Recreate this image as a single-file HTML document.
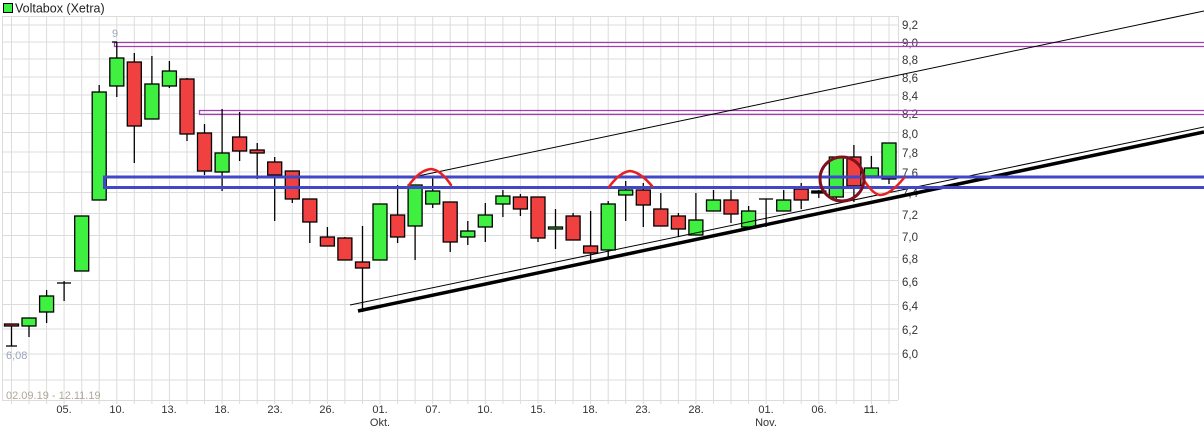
<!DOCTYPE html>
<html><head><meta charset="utf-8"><style>
html,body{margin:0;padding:0;background:#fff;}
svg{display:block;font-family:"Liberation Sans",sans-serif;}
</style></head><body>
<svg width="1204" height="435" viewBox="0 0 1204 435" xmlns="http://www.w3.org/2000/svg">
<rect width="1204" height="435" fill="#fff"/>
<!-- title -->
<rect x="3.5" y="3.5" width="9" height="9" fill="#40f040" stroke="#000" stroke-width="1"/>
<text x="15" y="12.5" font-size="12.5" fill="#222">Voltabox (Xetra)</text>
<!-- grid -->
<g stroke="#dcdcdc" stroke-width="1">
<line x1="2" y1="16.5" x2="898" y2="16.5"/>
<line x1="2" y1="400.5" x2="898" y2="400.5"/>
<line x1="2.5" y1="16" x2="2.5" y2="400"/>
<line x1="898.5" y1="16" x2="898.5" y2="400"/>
<g>
<line x1="2" x2="898" y1="25" y2="25"/><line x1="2" x2="898" y1="42" y2="42"/><line x1="2" x2="898" y1="59" y2="59"/><line x1="2" x2="898" y1="77" y2="77"/><line x1="2" x2="898" y1="95" y2="95"/><line x1="2" x2="898" y1="113.5" y2="113.5"/><line x1="2" x2="898" y1="132.5" y2="132.5"/><line x1="2" x2="898" y1="152" y2="152"/><line x1="2" x2="898" y1="172" y2="172"/><line x1="2" x2="898" y1="192.5" y2="192.5"/><line x1="2" x2="898" y1="213.5" y2="213.5"/><line x1="2" x2="898" y1="235.5" y2="235.5"/><line x1="2" x2="898" y1="257.5" y2="257.5"/><line x1="2" x2="898" y1="280.5" y2="280.5"/><line x1="2" x2="898" y1="304.5" y2="304.5"/><line x1="2" x2="898" y1="329" y2="329"/><line x1="2" x2="898" y1="354" y2="354"/><line x1="2" x2="898" y1="380" y2="380"/>
</g>
<g id="vg">
<line x1="11.5" x2="11.5" y1="16" y2="404"/><line x1="29" x2="29" y1="16" y2="404"/><line x1="46.6" x2="46.6" y1="16" y2="404"/><line x1="64.1" x2="64.1" y1="16" y2="404"/><line x1="81.7" x2="81.7" y1="16" y2="404"/><line x1="99.2" x2="99.2" y1="16" y2="404"/><line x1="116.8" x2="116.8" y1="16" y2="404"/><line x1="134.3" x2="134.3" y1="16" y2="404"/><line x1="151.9" x2="151.9" y1="16" y2="404"/><line x1="169.4" x2="169.4" y1="16" y2="404"/><line x1="187" x2="187" y1="16" y2="404"/><line x1="204.5" x2="204.5" y1="16" y2="404"/><line x1="222.1" x2="222.1" y1="16" y2="404"/><line x1="239.6" x2="239.6" y1="16" y2="404"/><line x1="257.2" x2="257.2" y1="16" y2="404"/><line x1="274.7" x2="274.7" y1="16" y2="404"/><line x1="292.3" x2="292.3" y1="16" y2="404"/><line x1="309.8" x2="309.8" y1="16" y2="404"/><line x1="327.4" x2="327.4" y1="16" y2="404"/><line x1="344.9" x2="344.9" y1="16" y2="404"/><line x1="362.5" x2="362.5" y1="16" y2="404"/><line x1="380" x2="380" y1="16" y2="404"/><line x1="397.6" x2="397.6" y1="16" y2="404"/><line x1="415.1" x2="415.1" y1="16" y2="404"/><line x1="432.7" x2="432.7" y1="16" y2="404"/><line x1="450.2" x2="450.2" y1="16" y2="404"/><line x1="467.8" x2="467.8" y1="16" y2="404"/><line x1="485.3" x2="485.3" y1="16" y2="404"/><line x1="502.9" x2="502.9" y1="16" y2="404"/><line x1="520.4" x2="520.4" y1="16" y2="404"/><line x1="538" x2="538" y1="16" y2="404"/><line x1="555.5" x2="555.5" y1="16" y2="404"/><line x1="573.1" x2="573.1" y1="16" y2="404"/><line x1="590.6" x2="590.6" y1="16" y2="404"/><line x1="608.2" x2="608.2" y1="16" y2="404"/><line x1="625.7" x2="625.7" y1="16" y2="404"/><line x1="643.3" x2="643.3" y1="16" y2="404"/><line x1="660.8" x2="660.8" y1="16" y2="404"/><line x1="678.4" x2="678.4" y1="16" y2="404"/><line x1="695.9" x2="695.9" y1="16" y2="404"/><line x1="713.5" x2="713.5" y1="16" y2="404"/><line x1="731" x2="731" y1="16" y2="404"/><line x1="748.6" x2="748.6" y1="16" y2="404"/><line x1="766.1" x2="766.1" y1="16" y2="404"/><line x1="783.7" x2="783.7" y1="16" y2="404"/><line x1="801.2" x2="801.2" y1="16" y2="404"/><line x1="818.8" x2="818.8" y1="16" y2="404"/><line x1="836.3" x2="836.3" y1="16" y2="404"/><line x1="853.9" x2="853.9" y1="16" y2="404"/><line x1="871.4" x2="871.4" y1="16" y2="404"/><line x1="889" x2="889" y1="16" y2="404"/>
</g>
</g>
<!-- right axis labels -->
<g font-size="11.5" fill="#333">
<text x="902" y="29">9,2</text><text x="902" y="47">9,0</text><text x="902" y="64">8,8</text><text x="902" y="82">8,6</text><text x="902" y="100">8,4</text><text x="902" y="118">8,2</text><text x="902" y="138">8,0</text><text x="902" y="157">7,8</text><text x="902" y="177">7,6</text><text x="902" y="197">7,4</text><text x="902" y="219">7,2</text><text x="902" y="241">7,0</text><text x="902" y="263">6,8</text><text x="902" y="286">6,6</text><text x="902" y="310">6,4</text><text x="902" y="334">6,2</text><text x="902" y="358">6,0</text>
</g>
<!-- bottom labels -->
<g font-size="11" fill="#333" text-anchor="middle">
<text x="64" y="413">05.</text><text x="117" y="413">10.</text><text x="169" y="413">13.</text><text x="222" y="413">18.</text><text x="275" y="413">23.</text><text x="327" y="413">26.</text><text x="380" y="413">01.</text><text x="380" y="426">Okt.</text><text x="433" y="413">07.</text><text x="485" y="413">10.</text><text x="538" y="413">15.</text><text x="590" y="413">18.</text><text x="643" y="413">23.</text><text x="696" y="413">28.</text><text x="766" y="413">01.</text><text x="766" y="426">Nov.</text><text x="819" y="413">06.</text><text x="871" y="413">11.</text>
</g>
<text x="6" y="359" font-size="11" fill="#9aa6bc">6,08</text>
<text x="6" y="399" font-size="11" fill="#b0a898">02.09.19 - 12.11.19</text>
<text x="112" y="37" font-size="11" fill="#9aa6bc">9</text>
<!-- purple lines -->
<g fill="none" stroke="#a040b0" stroke-width="1.3">
<path d="M1204 42.5 H114.5 V46.5 H1204"/>
<path d="M1204 110.5 H199.5 V114.5 H1204"/>
</g>
<!-- candles -->
<g stroke="#000" stroke-width="1.3">
<line x1="11.5" y1="324" x2="11.5" y2="346"/><line x1="6" y1="346" x2="17" y2="346"/><rect x="4.5" y="324" width="14" height="2" fill="#f04040"/>
<line x1="29" y1="318" x2="29" y2="337"/><rect x="22" y="318" width="14" height="8" fill="#40f040"/>
<line x1="46.6" y1="290" x2="46.6" y2="323"/><rect x="39.6" y="296" width="14" height="16" fill="#40f040"/>
<line x1="64.1" y1="281" x2="64.1" y2="301"/><line x1="57" y1="283" x2="71" y2="283"/>
<rect x="74.7" y="216" width="14" height="55" fill="#40f040"/>
<line x1="99.2" y1="85" x2="99.2" y2="92"/><rect x="92.2" y="92" width="14" height="108" fill="#40f040"/>
<line x1="116.8" y1="42" x2="116.8" y2="97"/><line x1="112" y1="42" x2="117" y2="42"/><rect x="109.8" y="58" width="14" height="28" fill="#40f040"/>
<line x1="134.3" y1="53" x2="134.3" y2="163"/><rect x="127.3" y="62" width="14" height="64" fill="#f04040"/>
<line x1="151.9" y1="56" x2="151.9" y2="119"/><rect x="144.9" y="84" width="14" height="35" fill="#40f040"/>
<line x1="169.4" y1="61" x2="169.4" y2="88"/><rect x="162.4" y="71" width="14" height="15" fill="#40f040"/>
<line x1="187" y1="78" x2="187" y2="141"/><rect x="180" y="79" width="14" height="55" fill="#f04040"/>
<line x1="204.5" y1="124" x2="204.5" y2="175"/><rect x="197.5" y="133" width="14" height="38" fill="#f04040"/>
<line x1="222.1" y1="109" x2="222.1" y2="191"/><rect x="215.1" y="153" width="14" height="19" fill="#40f040"/>
<line x1="239.6" y1="112" x2="239.6" y2="161"/><rect x="232.6" y="137" width="14" height="14" fill="#f04040"/>
<line x1="257.2" y1="143" x2="257.2" y2="179"/><rect x="250.2" y="150" width="14" height="3" fill="#f04040"/>
<line x1="274.7" y1="157" x2="274.7" y2="221"/><rect x="267.7" y="162" width="14" height="13" fill="#f04040"/>
<line x1="292.3" y1="171" x2="292.3" y2="203"/><rect x="285.3" y="171" width="14" height="28" fill="#f04040"/>
<line x1="309.8" y1="199" x2="309.8" y2="243"/><rect x="302.8" y="199" width="14" height="23" fill="#f04040"/>
<line x1="327.4" y1="227" x2="327.4" y2="246"/><rect x="320.4" y="237" width="14" height="9" fill="#f04040"/>
<line x1="344.9" y1="237" x2="344.9" y2="260"/><rect x="337.9" y="238" width="14" height="22" fill="#f04040"/>
<line x1="362.5" y1="226" x2="362.5" y2="312"/><rect x="355.5" y="262" width="14" height="6" fill="#f04040"/>
<rect x="373" y="204" width="14" height="56" fill="#40f040"/>
<line x1="397.6" y1="185" x2="397.6" y2="243"/><rect x="390.6" y="215" width="14" height="22" fill="#f04040"/>
<line x1="415.1" y1="185" x2="415.1" y2="260"/><rect x="408.1" y="185" width="14" height="41" fill="#40f040"/>
<line x1="432.7" y1="178" x2="432.7" y2="208"/><rect x="425.7" y="191" width="14" height="13" fill="#40f040"/>
<line x1="450.2" y1="202" x2="450.2" y2="252"/><rect x="443.2" y="202" width="14" height="40" fill="#f04040"/>
<line x1="467.8" y1="221" x2="467.8" y2="245"/><rect x="460.8" y="231" width="14" height="6" fill="#40f040"/>
<line x1="485.3" y1="203" x2="485.3" y2="242"/><rect x="478.3" y="215" width="14" height="12" fill="#40f040"/>
<line x1="502.9" y1="190" x2="502.9" y2="217"/><rect x="495.9" y="196" width="14" height="8" fill="#40f040"/>
<line x1="520.4" y1="194" x2="520.4" y2="216"/><rect x="513.4" y="197" width="14" height="12" fill="#f04040"/>
<line x1="538" y1="197" x2="538" y2="242"/><rect x="531" y="197" width="14" height="41" fill="#f04040"/>
<line x1="555.5" y1="209" x2="555.5" y2="249"/><rect x="548.5" y="227" width="14" height="2" fill="#40f040"/>
<line x1="573.1" y1="213" x2="573.1" y2="240"/><rect x="566.1" y="216" width="14" height="24" fill="#f04040"/>
<line x1="590.6" y1="211" x2="590.6" y2="260"/><rect x="583.6" y="246" width="14" height="7" fill="#f04040"/>
<line x1="608.2" y1="201" x2="608.2" y2="258"/><rect x="601.2" y="204" width="14" height="46" fill="#40f040"/>
<line x1="625.7" y1="181" x2="625.7" y2="221"/><rect x="618.7" y="190" width="14" height="5" fill="#40f040"/>
<line x1="643.3" y1="183" x2="643.3" y2="227"/><rect x="636.3" y="190" width="14" height="15" fill="#f04040"/>
<line x1="660.8" y1="193" x2="660.8" y2="226"/><rect x="653.8" y="209" width="14" height="17" fill="#f04040"/>
<line x1="678.4" y1="213" x2="678.4" y2="237"/><rect x="671.4" y="216" width="14" height="13" fill="#f04040"/>
<line x1="695.9" y1="193" x2="695.9" y2="235"/><rect x="688.9" y="220" width="14" height="15" fill="#40f040"/>
<line x1="713.5" y1="190" x2="713.5" y2="211"/><rect x="706.5" y="200" width="14" height="11" fill="#40f040"/>
<line x1="731" y1="190" x2="731" y2="223"/><rect x="724" y="200" width="14" height="14" fill="#f04040"/>
<line x1="748.6" y1="206" x2="748.6" y2="227"/><rect x="741.6" y="211" width="14" height="16" fill="#40f040"/>
<line x1="766.1" y1="199" x2="766.1" y2="227"/><line x1="759" y1="199" x2="773" y2="199"/>
<line x1="783.7" y1="190" x2="783.7" y2="211"/><rect x="776.7" y="200" width="14" height="11" fill="#40f040"/>
<line x1="801.2" y1="183" x2="801.2" y2="209"/><rect x="794.2" y="189" width="14" height="11" fill="#f04040"/>
<line x1="818.8" y1="190" x2="818.8" y2="198"/><rect x="811.8" y="191" width="14" height="2" fill="#000"/>
<line x1="836.3" y1="157" x2="836.3" y2="202"/><rect x="829.3" y="157" width="14" height="40" fill="#40f040"/>
<line x1="853.9" y1="145" x2="853.9" y2="202"/><rect x="846.9" y="157" width="14" height="29" fill="#f04040"/>
<line x1="871.4" y1="156" x2="871.4" y2="176"/><rect x="864.4" y="168" width="14" height="8" fill="#40f040"/>
<line x1="889" y1="143" x2="889" y2="184"/><rect x="882" y="143" width="14" height="36" fill="#40f040"/>
</g>
<!-- channel lines -->
<line x1="418" y1="176" x2="1204" y2="11" stroke="#000" stroke-width="1"/>
<line x1="350" y1="305" x2="1204" y2="127" stroke="#000" stroke-width="1"/>
<line x1="358" y1="311" x2="1204" y2="132" stroke="#000" stroke-width="3.5"/>
<!-- blue rectangle -->
<path d="M1204 177 H104.5 V187.5 H1204" fill="none" stroke="#4048c8" stroke-width="3"/>
<!-- red arcs -->
<g fill="none" stroke="#e82020" stroke-width="2.5" stroke-linecap="round">
<path d="M409 185 Q420 170 431 169 Q441 170 451 185"/>
<path d="M609 187 Q620 172 630 171 Q640 172 652 186"/>
<path d="M862 177 Q872 194 880 195 Q890 195 904 178"/>
</g>
<circle cx="842" cy="179" r="22" fill="none" stroke="#801020" stroke-width="3"/>
</svg>
</body></html>
